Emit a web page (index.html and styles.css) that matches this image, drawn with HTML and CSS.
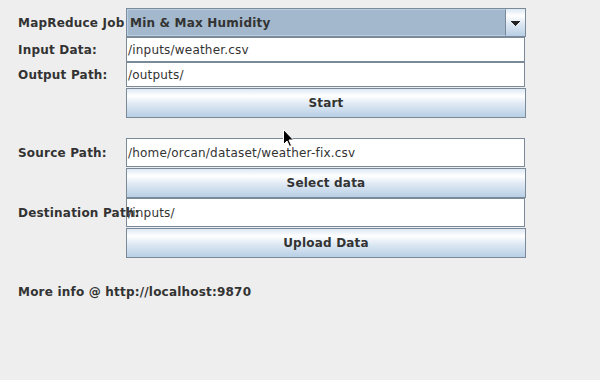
FILE: index.html
```html
<!DOCTYPE html>
<html>
<head>
<meta charset="utf-8">
<link rel="stylesheet" href="styles.css">
</head>
<body>
<div class="app">
  <div class="form">
    <div class="label">MapReduce Job</div>
    <div class="combo">
      <div class="combo-value">Min &amp; Max Humidity</div>
      <div class="combo-arrow">
        <svg width="9" height="5" viewBox="0 0 9 5"><path d="M0 0h9v1h-1v1h-1v1h-1v1h-1v1h-1v-1h-1v-1h-1v-1h-1v-1h-1z" fill="#222"/></svg>
      </div>
    </div>

    <div class="label">Input Data:</div>
    <div class="field short">/inputs/weather.csv</div>

    <div class="label">Output Path:</div>
    <div class="field short">/outputs/</div>

    <div class="label"></div>
    <div class="button">Start</div>

    <div class="label spaced">Source Path:</div>
    <div class="field tall spaced">/home/orcan/dataset/weather-fix.csv</div>

    <div class="label"></div>
    <div class="button">Select data</div>

    <div class="label over">Destination Path:</div>
    <div class="field tall">/inputs/</div>

    <div class="label"></div>
    <div class="button">Upload Data</div>
  </div>
  <div class="info">More info @ http://localhost:9870</div>
  <svg class="cursor" width="12" height="19" viewBox="0 0 12 19"><path d="M0.5 0.5 L0.5 15.5 L4 12 L6.5 17.5 L8.5 16.5 L6 11 L10.5 11 Z" fill="#000" stroke="#fff" stroke-width="1"/></svg>
</div>
</body>
</html>
```

FILE: styles.css
```css
html, body {
  margin: 0;
  padding: 0;
  background: #eeeeee;
}
body {
  width: 600px;
  height: 380px;
  overflow: hidden;
  font-family: "DejaVu Sans", sans-serif;
  font-size: 12px;
  letter-spacing: 0.2px;
  color: #333333;
}
.app {
  position: relative;
  padding: 8px 0 0 18px;
}
.form {
  display: grid;
  grid-template-columns: 108px 400px;
  align-items: center;
}
.label {
  font-weight: bold;
  white-space: nowrap;
  position: relative;
  z-index: 1;
  padding-top: 1px;
}
.spaced {
  margin-top: 20px;
}
.label.spaced {
  margin-top: 20px;
}
.combo {
  height: 29px;
  box-sizing: border-box;
  border: 1px solid #7a8a99;
  display: flex;
}
.combo-value {
  flex: 1;
  background: #a3b8cc;
  border: 1px solid #b8cfe5;
  border-right: 1px solid #7a8a99;
  font-weight: bold;
  display: flex;
  align-items: center;
  padding-left: 2px;
}
.combo-arrow {
  width: 19px;
  background: linear-gradient(#dde8f3 0%, #ffffff 25%, #dde8f3 55%, #b8cfe5 100%);
  display: flex;
  align-items: center;
  justify-content: center;
}
.combo-arrow svg {
  display: block;
  margin-top: 1px;
}
.field {
  width: 399px;
  box-sizing: border-box;
  background: #ffffff;
  border: 1px solid #7a8a99;
  padding-left: 1px;
  display: flex;
  align-items: center;
  color: #333333;
}
.field.short {
  height: 25px;
}
.field.tall {
  height: 29px;
}
.button {
  height: 30px;
  margin-top: 1px;
  box-sizing: border-box;
  border: 1px solid #7a8a99;
  background: linear-gradient(#dde8f3 0%, #ffffff 25%, #dde8f3 55%, #b8cfe5 100%);
  font-weight: bold;
  display: flex;
  align-items: center;
  justify-content: center;
}
.info {
  font-weight: bold;
  margin-top: 27px;
}
.cursor {
  position: absolute;
  left: 283px;
  top: 129px;
}
```
